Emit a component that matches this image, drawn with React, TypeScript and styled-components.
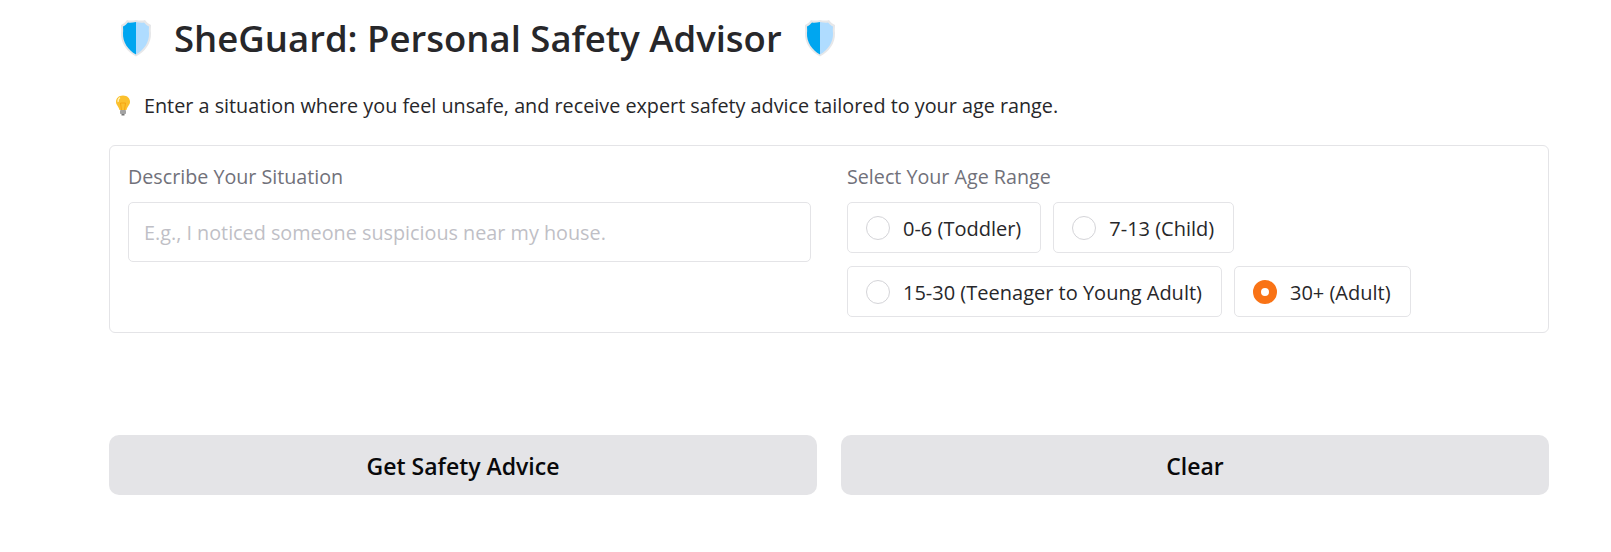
import React from 'react';
import styled, { createGlobalStyle } from 'styled-components';

const GlobalStyle = createGlobalStyle`
  html, body {
    margin: 0;
    padding: 0;
    background: #ffffff;
    font-family: "Open Sans", "Noto Sans", "Liberation Sans", sans-serif;
  }
`;

const ageRanges = [
    ['0-6 (Toddler)', '7-13 (Child)'],
    ['15-30 (Teenager to Young Adult)', '30+ (Adult)'],
];

const ShieldIcon: React.FC = () => (
    <ShieldSvg viewBox="0 0 32 38">
        <path d="M7 1 C10 2 13 1.500 16 1 C19 1.500 22 2 25 1 C26.500 3 28.500 5 31 6 C31 9 30.500 11 31 14 C31.500 24 25 33 16 37.500 C7 33 0.500 24 1 14 C1.500 11 1 9 1 6 C3.500 5 5.500 3 7 1 Z" fill="#e6e7e9" />
        <path d="M16 3 V35.500 C8 31 2.500 23 3 14 C3.400 11 3 9 3 7.500 C5 6.500 6.800 5 8 3.500 C10.500 4 13 3.500 16 3 Z" fill="#00a6f0" />
        <path d="M16 3 V35.500 C24 31 29.500 23 29 14 C28.600 11 29 9 29 7.500 C27 6.500 25.200 5 24 3.500 C21.500 4 19 3.500 16 3 Z" fill="#afdcff" />
    </ShieldSvg>
);

const BulbIcon: React.FC = () => (
    <BulbSvg viewBox="0 0 16 21">
        <path d="M8 0.500 C3.500 0.500 1 3.500 1 6.800 C1 10 3.800 11.500 4.500 15 H11.500 C12.200 11.500 15 10 15 6.800 C15 3.500 12.500 0.500 8 0.500 Z" fill="#fbc02d" />
        <path d="M5 2.500 C3.500 3.500 2.800 5 3.200 7" stroke="#fff3b8" strokeWidth="1.300" fill="none" />
        <path d="M6.500 15 L5.500 8 H10.500 L9.500 15" stroke="#f59e0b" strokeWidth="0.800" fill="none" />
        <rect x="5" y="15" width="6" height="4" rx="0.800" fill="#a3a3a3" />
        <rect x="6.500" y="19" width="3" height="1.500" fill="#757575" />
    </BulbSvg>
);

const App: React.FC = () => {
    return (
        <Page>
            <GlobalStyle />
            <Title>
                <ShieldIcon />
                <TitleText>SheGuard: Personal Safety Advisor</TitleText>
                <ShieldIcon />
            </Title>
            <Intro>
                <BulbIcon />
                Enter a situation where you feel unsafe, and receive expert safety advice tailored to your age range.
            </Intro>
            <Panel>
                <Column>
                    <FieldLabel>Describe Your Situation</FieldLabel>
                    <SituationInput placeholder="E.g., I noticed someone suspicious near my house." />
                </Column>
                <Column>
                    <FieldLabel>Select Your Age Range</FieldLabel>
                    <OptionRows>
                        {ageRanges.map(row => (
                            <OptionRow key={row[0]}>
                                {row.map(label => (
                                    <Option key={label}>
                                        <Radio $checked={label === '30+ (Adult)'} />
                                        <OptionText>{label}</OptionText>
                                    </Option>
                                ))}
                            </OptionRow>
                        ))}
                    </OptionRows>
                </Column>
            </Panel>
            <Actions>
                <ActionButton>Get Safety Advice</ActionButton>
                <ActionButton>Clear</ActionButton>
            </Actions>
        </Page>
    );
};

const Page = styled.div`
  box-sizing: border-box;
  height: 552px;
  padding: 0 62px 0 109px;
  overflow: hidden;
`;

const Title = styled.h1`
  display: flex;
  align-items: center;
  gap: 22px;
  height: 76px;
  margin: 0;
  padding-left: 11px;
  font-size: 36.5px;
  font-weight: 600;
  color: #27272a;
`;

const TitleText = styled.span`
  line-height: 1;
`;

const ShieldSvg = styled.svg`
  width: 32px;
  height: 38px;
  flex: none;
`;

const BulbSvg = styled.svg`
  width: 16px;
  height: 21px;
  flex: none;
`;

const Intro = styled.p`
  display: flex;
  align-items: center;
  gap: 13px;
  height: 24px;
  margin: 17px 0 0;
  padding-left: 6px;
  font-size: 19.8px;
  color: #27272a;
`;

const Panel = styled.div`
  box-sizing: border-box;
  display: grid;
  grid-template-columns: 1fr 1fr;
  gap: 36px;
  height: 188px;
  margin-top: 28px;
  padding: 18px;
  border: 1px solid #e4e4e7;
  border-radius: 6px;
`;

const Column = styled.div`
  display: flex;
  flex-direction: column;
  min-width: 0;
`;

const FieldLabel = styled.label`
  height: 26px;
  margin-bottom: 12px;
  font-size: 19.7px;
  line-height: 26px;
  color: #71717a;
`;

const SituationInput = styled.input`
  box-sizing: border-box;
  width: 100%;
  height: 60px;
  padding: 1px 15px 0;
  border: 1px solid #e4e4e7;
  border-radius: 5px;
  outline: none;
  font: inherit;
  font-size: 19.8px;
  color: #27272a;

  &::placeholder {
    color: #bfbfc6;
  }
`;

const OptionRows = styled.div`
  display: flex;
  flex-direction: column;
  gap: 13px;
`;

const OptionRow = styled.div`
  display: flex;
  gap: 12px;
`;

const Option = styled.div`
  box-sizing: border-box;
  display: flex;
  align-items: center;
  gap: 13px;
  height: 51px;
  padding: 0 19px 0 18px;
  border: 1px solid #e4e4e7;
  border-radius: 5px;
  font-size: 20px;
  color: #27272a;
  white-space: nowrap;
`;

const OptionText = styled.span`
  padding-top: 1px;
`;

const Radio = styled.span<{ $checked: boolean }>`
  box-sizing: border-box;
  width: 24px;
  height: 24px;
  flex: none;
  border-radius: 50%;
  border: ${p => (p.$checked ? '8px solid #f97316' : '1px solid #d4d4d8')};
  background: #ffffff;
`;

const Actions = styled.div`
  display: grid;
  grid-template-columns: 1fr 1fr;
  gap: 24px;
  margin-top: 102px;
`;

const ActionButton = styled.button`
  height: 60px;
  padding: 1px 0 0;
  border: none;
  border-radius: 10px;
  background: #e4e4e7;
  font: inherit;
  font-size: 23px;
  font-weight: 600;
  color: #09090b;
  cursor: pointer;
`;

export default App;
